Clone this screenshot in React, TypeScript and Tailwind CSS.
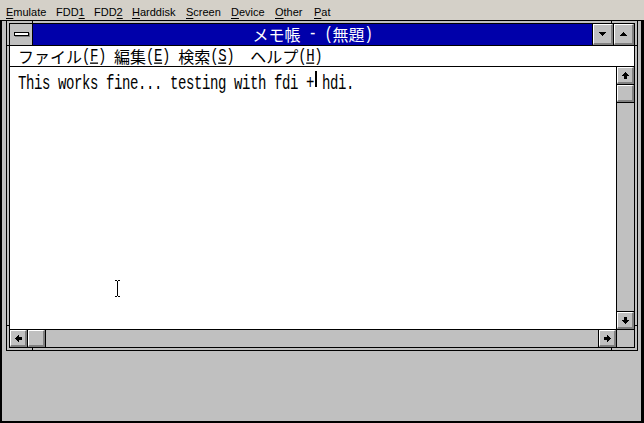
import React from "react";

function Px({ rows, w, h }: { rows: [number, number, number][]; w: number; h: number }) {
  return (
    <svg width={w} height={h} viewBox={`0 0 ${w} ${h}`} shapeRendering="crispEdges">
      {rows.map(([x, y, len], i) => (
        <rect key={i} x={x} y={y} width={len} height={1} fill="#000" />
      ))}
    </svg>
  );
}

const upArrow: [number, number, number][] = [
  [3, 0, 1], [2, 1, 3], [1, 2, 5], [0, 3, 7], [2, 4, 3], [2, 5, 3], [2, 6, 3],
];
const downArrow: [number, number, number][] = [
  [2, 0, 3], [2, 1, 3], [2, 2, 3], [0, 3, 7], [1, 4, 5], [2, 5, 3], [3, 6, 1],
];

function SideArrow({ dir }: { dir: "left" | "right" }) {
  // transpose of up arrow
  const cells: [number, number][] = [];
  upArrow.forEach(([x, y, len]) => {
    for (let i = 0; i < len; i++) cells.push([y, x + i]);
  });
  return (
    <svg width={7} height={7} viewBox="0 0 7 7" shapeRendering="crispEdges">
      {cells.map(([x, y], i) => (
        <rect key={i} x={dir === "left" ? x : 6 - x} y={y} width={1} height={1} fill="#000" />
      ))}
    </svg>
  );
}

function Bevel({ children }: { children?: React.ReactNode }) {
  return (
    <div className="w-full h-full flex items-center justify-center bg-[#c0c0c0] border-t border-l border-t-white border-l-white border-b-2 border-r-2 border-b-[#808080] border-r-[#808080]">
      {children}
    </div>
  );
}

const MONO =
  "font-['Liberation_Mono',monospace] text-[14px] tracking-[-0.4px] inline-block scale-y-[1.3] whitespace-pre";
const CJK = "font-['Noto_Sans_CJK_JP',sans-serif] text-[16px]";

function MenuItem({ jp, k, className = "" }: { jp: string; k: string; className?: string }) {
  return (
    <span className={`flex items-center ${className}`}>
      <span className={CJK}>{jp}</span>
      <span className={MONO}>
        (<span className="underline underline-offset-[1px]">{k}</span>)
      </span>
    </span>
  );
}

function HostMenu() {
  const it = (pre: string, u: string, post: string, w: string) => (
    <span className={`inline-block ${w}`}>
      {pre}
      <span className="underline underline-offset-[2px]">{u}</span>
      {post}
    </span>
  );
  return (
    <div className="h-[20px] shrink-0 flex pl-[6px] pt-[4px] leading-[16px] text-[11px] text-black font-['Liberation_Sans',Arial,sans-serif]">
      {it("", "E", "mulate", "w-[50px]")}
      {it("FDD", "1", "", "w-[38px]")}
      {it("FDD", "2", "", "w-[38px]")}
      {it("", "H", "arddisk", "w-[54px]")}
      {it("", "S", "creen", "w-[45px]")}
      {it("", "D", "evice", "w-[44px]")}
      {it("", "O", "ther", "w-[39px]")}
      {it("", "P", "at", "w-[40px]")}
    </div>
  );
}

function Window() {
  return (
    <div className="relative ml-[4px] w-[632px] h-[330px] border-l border-r border-b border-black bg-[#c0c0c0] p-[2px]">
      {/* resize border markers */}
      <div className="absolute left-[25px] top-0 w-px h-[2px] bg-black" />
      <div className="absolute left-[604px] top-0 w-px h-[2px] bg-black" />
      <div className="absolute left-[25px] top-[327px] w-px h-[2px] bg-black" />
      <div className="absolute left-[604px] top-[327px] w-px h-[2px] bg-black" />
      <div className="absolute left-0 top-[24px] w-[2px] h-px bg-black" />
      <div className="absolute left-0 top-[304px] w-[2px] h-px bg-black" />
      <div className="absolute left-[628px] top-[24px] w-[2px] h-px bg-black" />
      <div className="absolute left-[628px] top-[304px] w-[2px] h-px bg-black" />

      <div className="h-full border border-black flex flex-col bg-white">
        {/* title bar */}
        <div className="h-[22px] shrink-0 flex border-b border-black">
          <div className="w-[23px] border-r border-black bg-[#c0c0c0] flex items-center justify-center">
            <div className="w-[15px] h-[4px] border border-black bg-white shadow-[1px_1px_0_#808080] mb-[1px]" />
          </div>
          <div className="flex-1 bg-[#0000aa] text-white flex items-center justify-center leading-[21px]">
            <span className={CJK}>メモ帳</span>
            <span className={MONO}> - (</span>
            <span className={CJK}>無題</span>
            <span className={MONO}>)</span>
          </div>
          <div className="w-[21px] border-l border-black">
            <Bevel>
              <Px w={7} h={4} rows={[[0, 0, 7], [1, 1, 5], [2, 2, 3], [3, 3, 1]]} />
            </Bevel>
          </div>
          <div className="w-[21px] border-l border-black">
            <Bevel>
              <Px w={7} h={4} rows={[[3, 0, 1], [2, 1, 3], [1, 2, 5], [0, 3, 7]]} />
            </Bevel>
          </div>
        </div>

        {/* menu bar */}
        <div className="h-[21px] shrink-0 flex items-center pl-[8px] border-b border-black leading-[20px] text-black">
          <MenuItem jp="ファイル" k="F" />
          <MenuItem jp="編集" k="E" className="ml-[8px]" />
          <MenuItem jp="検索" k="S" className="ml-[8px]" />
          <MenuItem jp="ヘルプ" k="H" className="ml-[16px]" />
        </div>

        {/* client + vertical scrollbar */}
        <div className="flex-1 flex min-h-0">
          <div className="relative flex-1 bg-white pl-[8px] pt-[3px] leading-[16px] text-black">
            <span className="font-['Liberation_Mono',monospace] text-[14px] tracking-[-0.4px] inline-block origin-top scale-y-[1.4] whitespace-pre">
              This works fine... testing with fdi + hdi.
            </span>
            <div className="absolute left-[305px] top-[4px] w-[2px] h-[16px] bg-black" />
            <div className="absolute left-[104px] top-[213px]">
              <svg width={7} height={17} viewBox="0 0 7 17" shapeRendering="crispEdges">
                <rect x={1} y={0} width={2} height={1} fill="#000" />
                <rect x={4} y={0} width={2} height={1} fill="#000" />
                <rect x={3} y={1} width={1} height={15} fill="#000" />
                <rect x={1} y={16} width={2} height={1} fill="#000" />
                <rect x={4} y={16} width={2} height={1} fill="#000" />
              </svg>
            </div>
          </div>
          <div className="w-[18px] border-l border-black flex flex-col bg-[#c0c0c0]">
            <div className="h-[18px] border-b border-black">
              <Bevel>
                <Px w={7} h={7} rows={upArrow} />
              </Bevel>
            </div>
            <div className="h-[18px] border-b border-black">
              <Bevel />
            </div>
            <div className="flex-1" />
            <div className="h-[18px] border-t border-black">
              <Bevel>
                <Px w={7} h={7} rows={downArrow} />
              </Bevel>
            </div>
          </div>
        </div>

        {/* horizontal scrollbar */}
        <div className="h-[18px] shrink-0 flex border-t border-black bg-[#c0c0c0]">
          <div className="w-[18px] border-r border-black">
            <Bevel>
              <SideArrow dir="left" />
            </Bevel>
          </div>
          <div className="w-[18px] border-r border-black">
            <Bevel />
          </div>
          <div className="flex-1" />
          <div className="w-[18px] border-l border-black">
            <Bevel>
              <SideArrow dir="right" />
            </Bevel>
          </div>
          <div className="w-[18px] border-l border-black bg-[#c0c0c0]" />
        </div>
      </div>
    </div>
  );
}

export default function App() {
  return (
    <div className="w-[644px] h-[423px] flex flex-col bg-[#d4d0c8] overflow-hidden">
      <HostMenu />
      <div className="h-[403px] bg-[#c0c0c0] border-t border-l-2 border-r-[3px] border-b-2 border-black">
        <Window />
      </div>
    </div>
  );
}
